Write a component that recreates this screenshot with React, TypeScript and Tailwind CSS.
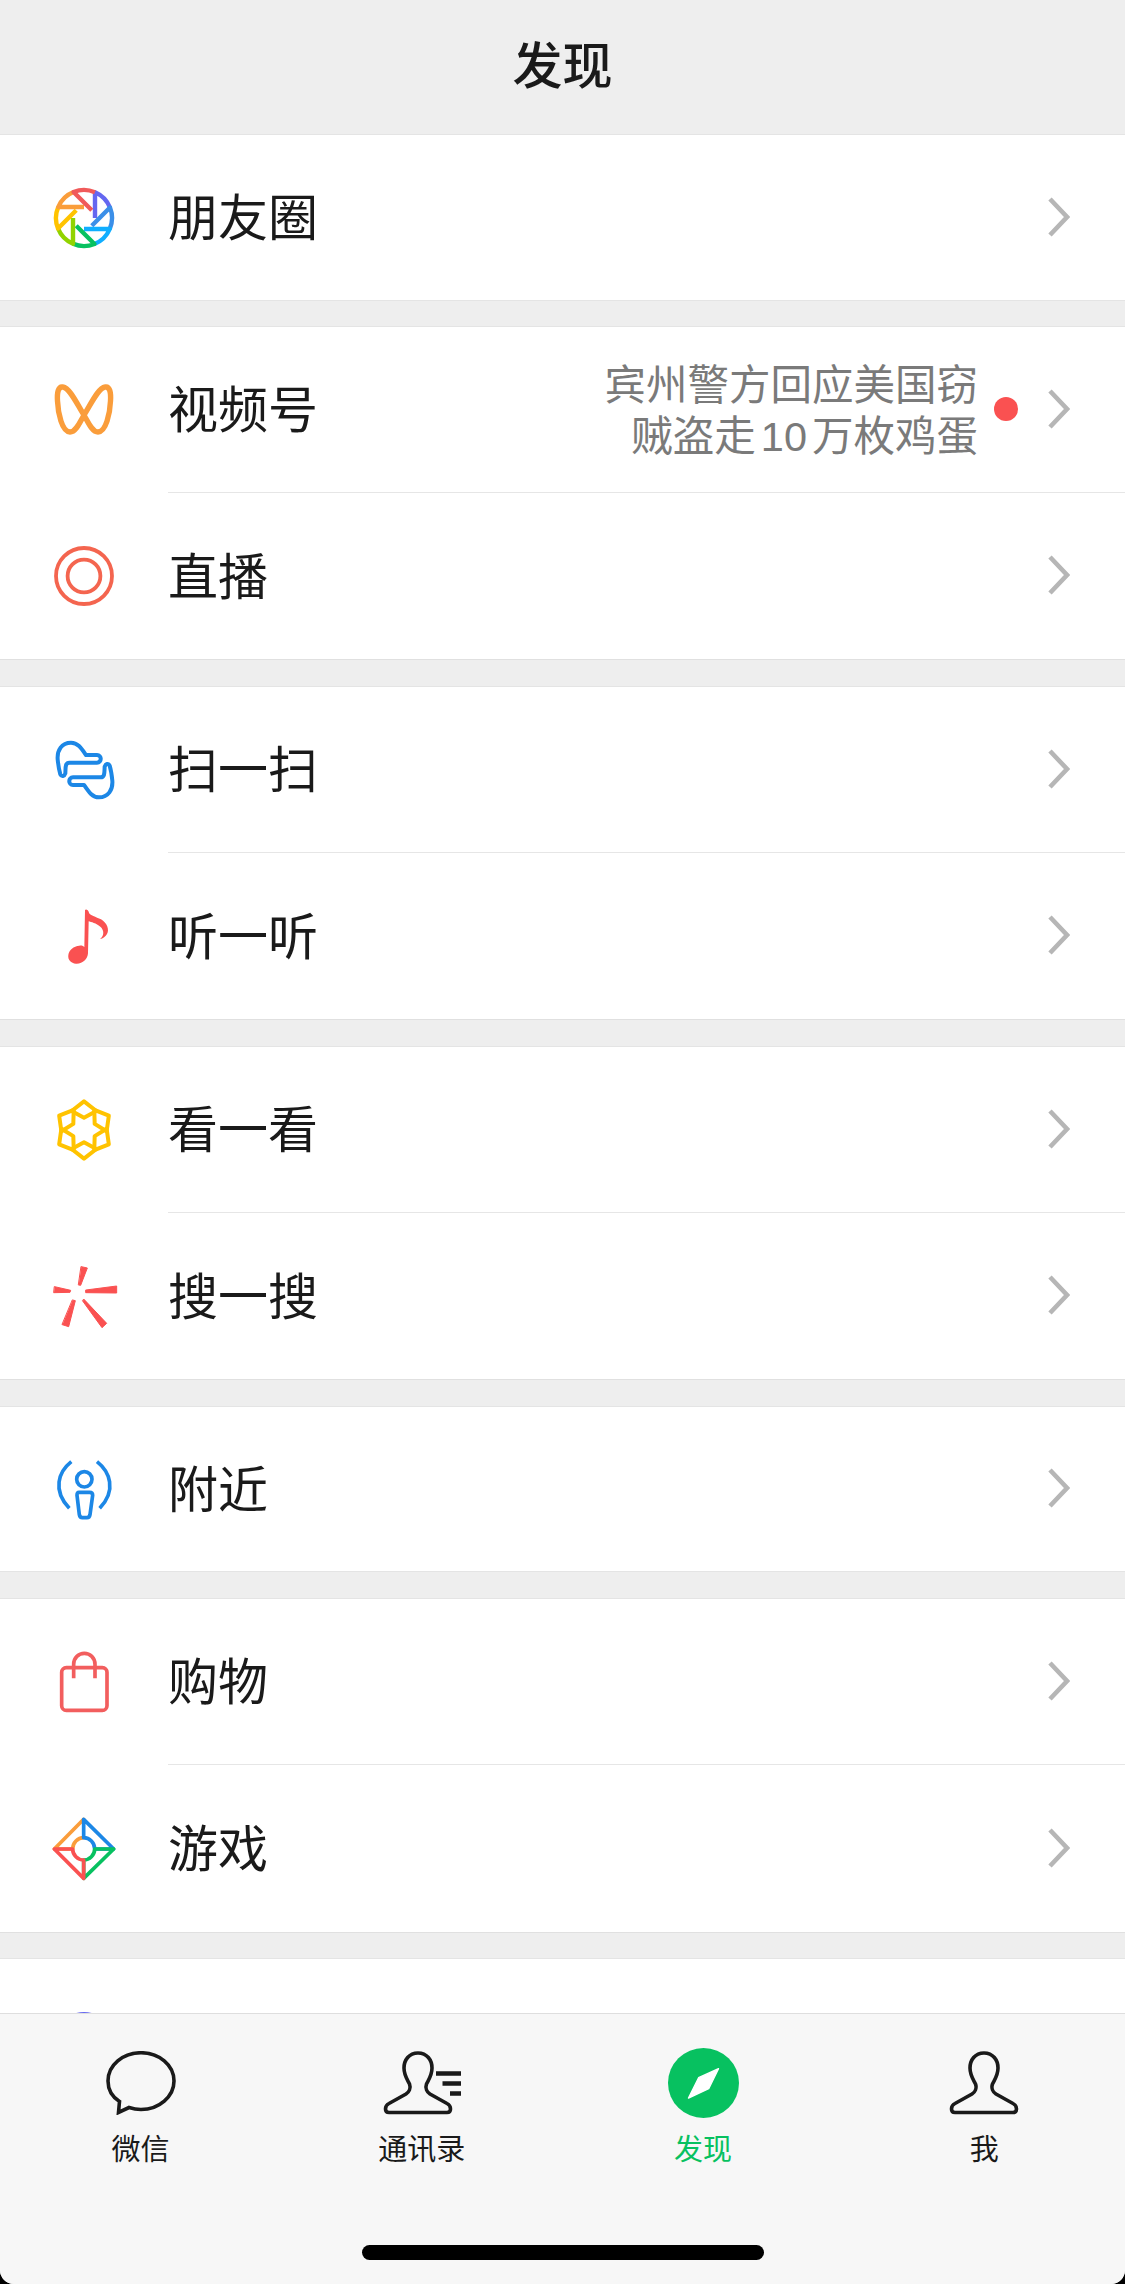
import React from "react";

const FONT = "font-['Liberation_Sans','Noto_Sans_CJK_SC',sans-serif]";

function Box({ vb, children }: { vb: string; children: React.ReactNode }) {
  return (
    <svg width="60" height="60" viewBox={vb} fill="none" strokeLinecap="round" strokeLinejoin="round" className="block overflow-visible">
      {children}
    </svg>
  );
}

function Moments() {
  const colors = ["#6467f0", "#3b8fe8", "#10aeff", "#07c160", "#91d300", "#ffc300", "#fa9d3b", "#f05a5a"];
  const angles = [0, 45, 90, 135, 180, 225, 270, 315];
  return (
    <svg width="60" height="60" viewBox="0 0 60 60" fill="none" className="block overflow-visible">
      {colors.map((c, i) => (
        <path
          key={c}
          d="M41 30 L41 4.23 A28 28 0 0 1 55.96 19.5"
          stroke={c}
          strokeWidth="4.4"
          strokeLinecap="butt"
          strokeLinejoin="round"
          transform={`rotate(${angles[i]} 30 30)`}
        />
      ))}
    </svg>
  );
}

function Channels() {
  return (
    <svg width="60" height="60" viewBox="0 0 60 60" fill="none" className="block overflow-visible">
      <path
        d="M30 35 C24 26 16 8 9 7 C4 6 3 13 3.5 21 C4 33 8 52 16 52 C22 52 26 42 30 35 C34 42 38 52 44 52 C52 52 56 33 56.5 21 C57 13 56 6 51 7 C44 8 36 26 30 35 Z"
        stroke="#fa9d3b"
        strokeWidth="5.4"
        strokeLinejoin="round"
      />
    </svg>
  );
}

function Live() {
  return (
    <svg width="60" height="60" viewBox="0 0 60 60" fill="none" className="block overflow-visible">
      <circle cx="30" cy="30" r="28" stroke="#f4654f" strokeWidth="3.8" />
      <circle cx="30" cy="30" r="16.4" stroke="#f4654f" strokeWidth="3.8" />
    </svg>
  );
}

function Scan() {
  const d =
    "M145 155 L228 155 C243 155 243 132 228 132 L195 132 C180 110 170 95 150 95 C122 95 108 118 110 145 C112 165 115 180 118 190 C122 198 130 196 133 187 C134 170 132 155 145 155 Z";
  return (
    <Box vb="99 87 180 180">
      <path d={d} stroke="#1c87e6" strokeWidth="12" />
      <path d={d} stroke="#1c87e6" strokeWidth="12" transform="rotate(180 192 177)" />
    </Box>
  );
}

function Music() {
  return (
    <Box vb="99 588 180 180">
      <path
        fill="#fa5151"
        d="M192 600 C195 596 202 600 204 608 C206 616 225 620 240 628 C258 638 266 660 258 672 C254 680 246 686 237 687 C250 678 250 660 238 650 C226 640 210 636 203 634 L201 730 C200 748 185 762 165 761 C150 760 140 750 142 735 C144 720 158 708 175 707 C182 706 188 708 190 712 Z"
      />
    </Box>
  );
}

function Look() {
  const angles = [0, 60, 120, 180, 240, 300];
  return (
    <Box vb="-90 -90 180 180">
      {angles.map((a) => (
        <path key={a} d="M0 -86 L37 -57 L0 -37 L-37 -57 Z" stroke="#ffc300" strokeWidth="12" transform={`rotate(${a})`} />
      ))}
    </Box>
  );
}

function Search() {
  const blades = [
    "172,92 190,96 170,148 164,147",
    "92,152 140,163 138,169 90,170",
    "186,162 278,150 278,171 186,170",
    "146,192 154,194 134,272 115,266",
    "180,190 248,262 234,275 176,195",
  ];
  return (
    <Box vb="90 90 180 180">
      {blades.map((p) => (
        <polygon key={p} points={p} fill="#fa5151" stroke="#fa5151" strokeWidth="3" />
      ))}
    </Box>
  );
}

function Nearby() {
  return (
    <Box vb="101 87 180 180">
      <g stroke="#1c87e6" strokeWidth="11">
        <path d="M153 95 C115 125 95 180 147 235" strokeLinecap="butt" />
        <path d="M230 95 C268 125 290 180 238 235" strokeLinecap="butt" />
        <circle cx="192" cy="148" r="23" />
        <path d="M176 187 L208 187 C214 187 217 190 217 196 L209 254 C208 260 205 263 200 263 L186 263 C181 263 178 260 177 254 L170 196 C170 190 172 187 176 187 Z" />
      </g>
    </Box>
  );
}

function Shop() {
  return (
    <Box vb="101 63 180 180">
      <g stroke="#f25e5e" strokeWidth="11">
        <rect x="124" y="110" width="136" height="128" rx="14" />
        <path d="M160 142 L160 100 C160 80 175 67 192 67 C209 67 224 80 224 100 L224 142" strokeLinecap="butt" />
      </g>
    </Box>
  );
}

function Game() {
  return (
    <Box vb="101 567 180 180">
      <g strokeWidth="11">
        <path d="M190 568 L102 657 L157 657 C157 638 172 623 190 623" stroke="#fa9d3b" />
        <path d="M190 623 L190 568 L280 657 L223 657 C223 638 208 623 190 623" stroke="#1c87e6" />
        <path d="M280 657 L190 745 L190 690 C208 690 223 675 223 657 L280 657" stroke="#07c160" />
        <path d="M190 745 L102 657 L157 657 C157 675 172 690 190 690 L190 745" stroke="#fa5151" />
      </g>
    </Box>
  );
}

function MiniProgram() {
  return (
    <svg width="60" height="60" viewBox="0 0 60 60" className="block">
      <circle cx="30" cy="30" r="30" fill="#6467f0" />
    </svg>
  );
}

function Chevron() {
  return (
    <svg width="22" height="40" viewBox="0 0 22 40" fill="none" className="block shrink-0 -mt-[2px]">
      <path d="M2 2 L19 20 L2 38" stroke="#b6b6b6" strokeWidth="4.6" />
    </svg>
  );
}

type RowProps = {
  icon: React.ReactNode;
  label?: string;
  divider?: boolean;
  top?: boolean;
  bottom?: boolean;
  h?: string;
  extra?: React.ReactNode;
};

function Row({ icon, label, divider, top, bottom, h = "h-[167px]", extra }: RowProps) {
  return (
    <div className={`flex items-center bg-white pl-[54px] ${h} ${top ? "border-t border-[#e4e4e4]" : ""} ${bottom ? "border-b border-[#e0e0e0]" : ""}`}>
      <div className="w-[60px] h-[60px] shrink-0">{icon}</div>
      <div className={`ml-[54px] flex-1 h-full flex items-center pr-[55px] ${divider ? "border-b border-[#e6e6e6]" : ""}`}>
        {label ? <span className="pt-[3px] text-[50px] leading-[60px] text-[#1a1a1a]">{label}</span> : null}
        <div className="ml-auto flex items-center">
          {extra}
          <Chevron />
        </div>
      </div>
    </div>
  );
}

function ChatIcon() {
  return (
    <svg width="70" height="64" viewBox="0 0 70 64" fill="none" className="block">
      <path
        d="M35 1.75 C17 1.75 2 14 2 30 C2 39 6.5 46 13.5 50.5 L12.5 61.5 L23 56.5 C27 57.8 31 58.5 35 58.5 C53 58.5 68 45.5 68 30 C68 14 53 1.75 35 1.75 Z"
        stroke="#1a1a1a"
        strokeWidth="3.6"
      />
    </svg>
  );
}

const PERSON =
  "M35 2 C26 2 21 9 21 17 C21 24 24 28 26.5 33 C28 37 26 41 23 43 L6 52.5 C3 54 2.5 56 2.5 58 C2.5 60.5 3.5 61.5 6 61.5 L64 61.5 C66.5 61.5 67.5 60.5 67.5 58 C67.5 56 67 54 64 52.5 L47 43 C44 41 42 37 43.5 33 C46 28 49 24 49 17 C49 9 44 2 35 2 Z";

function ContactsIcon() {
  return (
    <svg width="78" height="64" viewBox="0 0 78 64" fill="none" className="block">
      <path d={PERSON} stroke="#1a1a1a" strokeWidth="3.6" />
      <path d="M53 22.5 H78 M59.5 32.5 H78 M67 42.5 H78" stroke="#1a1a1a" strokeWidth="4.6" />
    </svg>
  );
}

function CompassIcon() {
  return (
    <svg width="71" height="70" viewBox="0 0 71 70" className="block">
      <ellipse cx="35.5" cy="35" rx="35.5" ry="35" fill="#07c160" />
      <path d="M50.5 20.7 L30.6 29.7 L20.5 50 L40.7 40.7 Z" fill="#fff" stroke="#fff" strokeWidth="1.4" strokeLinejoin="round" />
    </svg>
  );
}

function MeIcon() {
  return (
    <svg width="70" height="64" viewBox="0 0 70 64" fill="none" className="block">
      <path d={PERSON} stroke="#1a1a1a" strokeWidth="3.6" />
    </svg>
  );
}

function Tab({ icon, label, active }: { icon: React.ReactNode; label: string; active?: boolean }) {
  return (
    <div className="flex-1 flex flex-col items-center">
      <div className="h-[70px] flex items-center justify-center">{icon}</div>
      <span className={`mt-[15px] text-[29px] leading-[34px] ${active ? "text-[#07c160]" : "text-[#1a1a1a]"}`}>{label}</span>
    </div>
  );
}

export default function App() {
  return (
    <div className={`w-full h-[2284px] bg-black ${FONT}`}>
      <div className="h-full rounded-b-[14px] overflow-hidden flex flex-col bg-[#eeeeee]">
        <header className="h-[134px] shrink-0 flex items-center justify-center">
          <h1 className="text-[50px] leading-[60px] font-medium text-[#1a1a1a]">发现</h1>
        </header>

        <main className="flex-1 min-h-0 overflow-hidden">
          <Row icon={<Moments />} label="朋友圈" top bottom />

          <div className="mt-[25px]">
            <Row
              icon={<Channels />}
              label="视频号"
              top
              divider
              extra={
                <>
                  <div className="pt-[2px] text-right text-[41.5px] leading-[51px] text-[#7a7a7a]">
                    <div>宾州警方回应美国窃</div>
                    <div>
                      贼盗走<span className="mx-[5px]">10</span>万枚鸡蛋
                    </div>
                  </div>
                  <span className="ml-[16px] mr-[30px] w-[24px] h-[24px] rounded-full bg-[#fa5151] shrink-0 -mt-[2px]" />
                </>
              }
            />
            <Row icon={<Live />} label="直播" bottom />
          </div>

          <div className="mt-[26px]">
            <Row icon={<Scan />} label="扫一扫" top divider />
            <Row icon={<Music />} label="听一听" bottom />
          </div>

          <div className="mt-[26px]">
            <Row icon={<Look />} label="看一看" top divider />
            <Row icon={<Search />} label="搜一搜" bottom />
          </div>

          <div className="mt-[26px]">
            <Row icon={<Nearby />} label="附近" top bottom h="h-[166px]" />
          </div>

          <div className="mt-[26px]">
            <Row icon={<Shop />} label="购物" top divider />
            <Row icon={<Game />} label="游戏" bottom h="h-[168px]" />
          </div>

          <div className="mt-[25px]">
            <Row icon={<MiniProgram />} top />
          </div>
        </main>

        <nav className="h-[271px] shrink-0 bg-[#f7f7f7] border-t border-[#dedede] flex flex-col">
          <div className="flex pt-[34px]">
            <Tab icon={<ChatIcon />} label="微信" />
            <Tab icon={<ContactsIcon />} label="通讯录" />
            <Tab icon={<CompassIcon />} label="发现" active />
            <Tab icon={<MeIcon />} label="我" />
          </div>
          <div className="mt-auto mb-[24px] mx-auto w-[402px] h-[15px] rounded-full bg-black" />
        </nav>
      </div>
    </div>
  );
}
